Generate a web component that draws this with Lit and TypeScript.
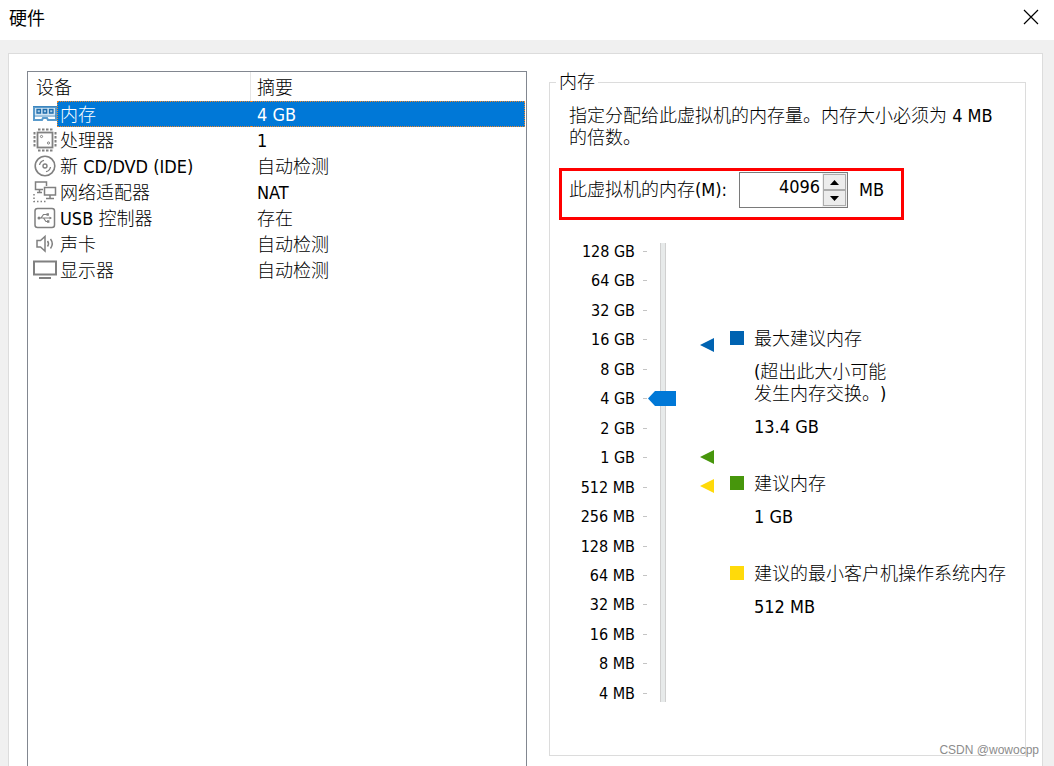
import { LitElement, html, css, svg } from "lit";
import { customElement, state } from "lit/decorators.js";

const icons = {
  memory: svg`<path d="M1 6H23V19H15L14 17H10L9 19H1Z" fill="#fff" stroke="#5a9bcc" stroke-width="2"/><path d="M2 7H22V14H2Z" fill="#d3e6f4"/><path d="M0 5.500H24M1 15H23" stroke="#3d86bf" stroke-width="1"/><path d="M4 8.500H7.500V12H4ZM10.200 8.500H13.700V12H10.200ZM16.500 8.500H20V12H16.500Z" fill="#a9cde8" stroke="#1f6cab" stroke-width="1.300"/>`,
  cpu: svg`<g fill="none" stroke="#808080"><rect x="4.500" y="5.500" width="15" height="15" stroke-width="1.800"/><path d="M5 2.500H20M5 23.500H20M1.500 5V21M22.500 5V21" stroke-width="2" stroke-dasharray="2.500 1.500"/><circle cx="8.500" cy="9.500" r="1.100"/><circle cx="15.500" cy="16" r="1.100"/></g>`,
  disc: svg`<g fill="none" stroke="#808080" stroke-width="1.600"><circle cx="12" cy="13" r="9.800"/><circle cx="12" cy="13" r="2" stroke-width="1.400"/><path d="M6.500 12A6 6 0 0 1 11 7.300M17.500 14A6 6 0 0 1 13 18.700" stroke-width="1.300"/></g>`,
  network: svg`<g fill="none" stroke="#808080" stroke-width="1.500"><path d="M10 10.500H2.500V3H13.500V7M6.500 10.500V13M4 13.500H9"/><path d="M11.500 8.500H22.500V16H11.500ZM17 16V19.500M13 19.500H21"/><path d="M1 15V22.500H14" stroke-dasharray="1.500 2"/></g>`,
  usb: svg`<rect x="2" y="3.500" width="19.500" height="19" rx="2.500" fill="none" stroke="#808080" stroke-width="1.500"/><path d="M6 13H18M8 13L10.500 9.500H14M10.500 13L13 16.500H15" fill="none" stroke="#808080" stroke-width="1.200"/><circle cx="6" cy="13" r="1.500" fill="#808080"/><path d="M19 13L16.500 11.500V14.500ZM13.500 8.300H15.900V10.700H13.500ZM14 15.300H16.400V17.700H14Z" fill="#808080"/>`,
  sound: svg`<g fill="none" stroke="#808080" stroke-width="1.500"><path d="M4 9.500H7.500L12 5.500V20L7.500 16H4Z"/><path d="M14.500 10Q16.500 12.700 14.500 15.500M17.500 8Q21 12.700 17.500 17.500"/></g>`,
  display: svg`<rect x="1" y="4.500" width="22" height="13" fill="#fff" stroke="#808080" stroke-width="2"/><path d="M6 21H18" stroke="#808080" stroke-width="2"/>`,
};

const devices = [
  { icon: icons.memory, name: "内存", summary: "4 GB" },
  { icon: icons.cpu, name: "处理器", summary: "1" },
  { icon: icons.disc, name: "新 CD/DVD (IDE)", summary: "自动检测" },
  { icon: icons.network, name: "网络适配器", summary: "NAT" },
  { icon: icons.usb, name: "USB 控制器", summary: "存在" },
  { icon: icons.sound, name: "声卡", summary: "自动检测" },
  { icon: icons.display, name: "显示器", summary: "自动检测" },
];

const sizes = [
  "128 GB", "64 GB", "32 GB", "16 GB", "8 GB", "4 GB", "2 GB", "1 GB",
  "512 MB", "256 MB", "128 MB", "64 MB", "32 MB", "16 MB", "8 MB", "4 MB",
];

@customElement("device-list")
class DeviceList extends LitElement {
  @state() private selected = 0;

  static styles = css`
    :host { display: block; border: 1px solid #828790; border-bottom: 0; padding-right: 1px; min-width: 0; }
    .table { width: 100%; table-layout: fixed; border-collapse: separate; border-spacing: 0; }
    .icon-col { width: 29px; }
    .name-col { width: 194px; }
    .head { height: 29px; padding: 3px 0 0 8px; font-weight: inherit; text-align: left; line-height: 22px; box-sizing: border-box; }
    .head-name { border-right: 1px solid #e5e5e5; }
    .head-summary { padding-left: 6px; }
    .cell { height: 26px; padding: 2px 0 0; box-sizing: border-box; line-height: 22px; white-space: nowrap; border: 1px solid transparent; border-width: 1px 0; }
    .icon-cell { padding: 0 0 0 5px; border: 0; }
    .name { padding-left: 2px; border-left-width: 1px; }
    .summary { padding-left: 6px; border-right-width: 1px; }
    .selected .name, .selected .summary { background: #0078d7; color: #fff; border-color: #f08728; border-style: dotted; }
    .icon { display: block; width: 24px; height: 26px; }
  `;

  render() {
    return html`
      <table class="table">
        <colgroup><col class="icon-col"><col class="name-col"><col></colgroup>
        <thead>
          <tr><th class="head head-name" colspan="2">设备</th><th class="head head-summary">摘要</th></tr>
        </thead>
        <tbody>
          ${devices.map((d, i) => html`
            <tr class=${i === this.selected ? "selected" : ""} @click=${() => (this.selected = i)}>
              <td class="cell icon-cell"><svg class="icon" viewBox="0 0 24 26" aria-hidden="true">${d.icon}</svg></td>
              <td class="cell name">${d.name}</td>
              <td class="cell summary">${d.summary}</td>
            </tr>`)}
        </tbody>
      </table>`;
  }
}

@customElement("memory-settings")
class MemorySettings extends LitElement {
  @state() private memory = 4096;

  static styles = css`
    :host { display: block; min-width: 0; }
    .group { margin: 0; padding: 0 19px 53px; border: 1px solid #dcdcdc; min-width: 0; }
    .title { margin-left: -13px; padding: 0 3px; line-height: 22px; }
    .intro { margin: 12px 0 19px; line-height: 22px; }
    .amount { display: flex; align-items: center; width: max-content; margin-left: -10px; padding: 1px 17px 9px 7px; border: 3px solid #f00; line-height: 22px; }
    .spin { display: flex; box-sizing: border-box; width: 109px; height: 36px; margin: 0 11px 0 12px; border: 1px solid #7a7a7a; }
    .number { flex: 1; min-width: 0; border: 0; padding: 0 2px 6px 0; background: #fff; color: #000; font: inherit; text-align: right; outline: 0; }
    .buttons { display: flex; flex-direction: column; width: 25px; padding: 1px; box-sizing: border-box; background: #f0f0f0; }
    .step { flex: 1; display: flex; align-items: center; justify-content: center; padding: 0; border: 1px solid #acacac; background: #ececec; }
    .arrow { display: block; width: 9px; height: 5px; }
    .scale { display: flex; margin-top: 23px; }
    .labels { display: flex; flex-direction: column; justify-content: space-between; width: 78px; font-size: 16px; line-height: 17px; }
    .mark { display: flex; align-items: center; justify-content: flex-end; gap: 8px; white-space: nowrap; }
    .mark::after { content: ""; width: 4px; height: 1px; background: #c4c4c4; }
    .slider {
      appearance: none; writing-mode: vertical-lr; direction: rtl; width: 28px; height: 459px; margin: 0 24px 0 1px;
      background: linear-gradient(90deg, transparent 12px, #d0d0d0 12px, #d0d0d0 13px, #e7eaea 13px, #e7eaea 17px, #d0d0d0 17px, #d0d0d0 18px, transparent 18px);
    }
    .slider::-webkit-slider-thumb { appearance: none; width: 28px; height: 15px; background: #0078d7; clip-path: polygon(0 50%, 7px 0, 100% 0, 100% 100%, 7px 100%); }
    .markers { flex: none; width: 14px; height: 459px; }
    .legend { display: flex; flex-direction: column; gap: 35px; margin: 85px 0 0 16px; line-height: 22px; white-space: nowrap; }
    .entry { display: grid; grid-template-columns: 14px auto; column-gap: 10px; row-gap: 11px; }
    .swatch { height: 14px; margin-top: 3px; }
    .blue { background: #0063b1; }
    .green { background: #47960c; }
    .yellow { background: #ffda0a; }
    .text { grid-column: 2; }
  `;

  private get index() {
    return Math.round(Math.log2(this.memory / 4));
  }

  render() {
    return html`
      <fieldset class="group">
        <legend class="title">内存</legend>
        <p class="intro">指定分配给此虚拟机的内存量。内存大小必须为 4 MB 的倍数。</p>
        <div class="amount">
          <label for="memory">此虚拟机的内存(M):</label>
          <div class="spin">
            <input class="number" id="memory" type="text" inputmode="numeric" .value=${String(this.memory)}
              @change=${(e: Event) => (this.memory = Math.max(4, Number((e.target as HTMLInputElement).value) || 4))}>
            <div class="buttons">
              <button class="step" type="button" aria-label="增加" @click=${() => (this.memory += 4)}>
                <svg class="arrow" viewBox="0 0 9 5"><path d="M0 5L4.500 0L9 5Z"/></svg>
              </button>
              <button class="step" type="button" aria-label="减少" @click=${() => (this.memory = Math.max(4, this.memory - 4))}>
                <svg class="arrow" viewBox="0 0 9 5"><path d="M0 0H9L4.500 5Z"/></svg>
              </button>
            </div>
          </div>
          <span>MB</span>
        </div>
        <div class="scale">
          <div class="labels">${sizes.map((s) => html`<span class="mark">${s}</span>`)}</div>
          <input class="slider" type="range" min="0" max="15" aria-label="内存" .value=${String(this.index)}
            @input=${(e: Event) => (this.memory = 4 * 2 ** Number((e.target as HTMLInputElement).value))}>
          <svg class="markers" viewBox="0 0 14 459" aria-hidden="true">
            <path d="M0 102L14 95V109Z" fill="#0063b1"/>
            <path d="M0 214L14 207V221Z" fill="#47960c"/>
            <path d="M0 243L14 236V250Z" fill="#ffda0a"/>
          </svg>
          <div class="legend">
            <div class="entry">
              <span class="swatch blue"></span><span>最大建议内存</span>
              <span class="text">(超出此大小可能<br>发生内存交换。)</span>
              <span class="text">13.4 GB</span>
            </div>
            <div class="entry">
              <span class="swatch green"></span><span>建议内存</span>
              <span class="text">1 GB</span>
            </div>
            <div class="entry">
              <span class="swatch yellow"></span><span>建议的最小客户机操作系统内存</span>
              <span class="text">512 MB</span>
            </div>
          </div>
        </div>
      </fieldset>`;
  }
}

@customElement("app-root")
class AppRoot extends LitElement {
  static styles = css`
    :host {
      display: flex; flex-direction: column; position: relative; height: 100vh; overflow: hidden; background: #f0f0f0; color: #000;
      font: 300 18px "DejaVu Sans Condensed", "Noto Sans CJK SC", sans-serif; text-spacing-trim: space-all;
    }
    .titlebar { flex: none; display: flex; align-items: center; justify-content: space-between; height: 40px; padding: 0 15px 6px 9px; box-sizing: border-box; background: #fff; }
    .heading { margin: 0; font: 400 18px "Noto Sans CJK SC", sans-serif; line-height: 24px; }
    .close { padding: 0; border: 0; background: none; }
    .cross { display: block; width: 16px; height: 16px; }
    .panel {
      flex: 1; display: grid; grid-template-columns: 500fr 477fr; gap: 22px; min-height: 0;
      margin: 13px 11px 0 8px; padding: 17px 16px 0 18px; border: 1px solid #dcdcdc; border-bottom: 0; background: #fff;
    }
    .watermark { position: absolute; right: 15px; bottom: 8px; color: #8c8c8c; font: 400 12px "Liberation Sans", sans-serif; line-height: 16px; }
  `;

  render() {
    return html`
      <header class="titlebar">
        <h1 class="heading">硬件</h1>
        <button class="close" type="button" aria-label="关闭">
          <svg class="cross" viewBox="0 0 16 16"><path d="M1 1L15 15M15 1L1 15" stroke="#000" stroke-width="1.200"/></svg>
        </button>
      </header>
      <main class="panel">
        <device-list></device-list>
        <memory-settings></memory-settings>
      </main>
      <div class="watermark">CSDN @wowocpp</div>`;
  }
}
